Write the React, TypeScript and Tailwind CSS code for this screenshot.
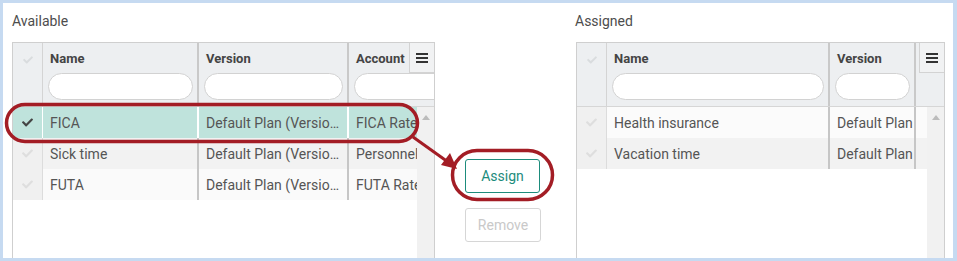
import React from 'react';
import { FaCheck } from 'react-icons/fa';

type Col = { key: string; label: string; width: number };

interface GridProps {
  cols: Col[];
  rows: { cells: string[]; selected?: boolean; bg: string }[];
}

function MenuIcon() {
  return (
    <svg width="12" height="10" viewBox="0 0 12 10">
      <rect x="0" y="0" width="12" height="2" fill="#333" />
      <rect x="0" y="4" width="12" height="2" fill="#333" />
      <rect x="0" y="8" width="12" height="2" fill="#333" />
    </svg>
  );
}

function Grid({ cols, rows }: GridProps) {
  return (
    <div className="flex-1 min-h-0 flex flex-col border border-b-0 border-[#cfcfcf] bg-white overflow-hidden">
      {/* Header */}
      <div className="relative flex h-[64px] shrink-0 bg-[#edeff1] border-b border-[#d6d6d6] overflow-hidden">
        <div className="w-[30px] shrink-0 border-r border-[#d4d4d4] flex justify-center pt-[12px]">
          <FaCheck className="text-[#d9dcde] w-[10px] h-[10px]" />
        </div>
        {cols.map((c) => (
          <div
            key={c.key}
            style={{ width: c.width }}
            className="shrink-0 flex flex-col border-r-2 border-[#c9c9c9]"
          >
            <div className="h-[30px] pl-[7px] pt-[1px] leading-[30px] text-[13px] font-bold text-[#444] whitespace-nowrap overflow-hidden">
              {c.label}
            </div>
            <div className="pl-[5px] pr-[4px]">
              <div className="h-[27px] rounded-full border border-[#d2d2d2] bg-white" />
            </div>
          </div>
        ))}
        <div className="absolute top-0 right-0 w-[25px] h-[30px] bg-[#f1f2f3] border-l border-b border-[#d3d3d3] flex items-center justify-center">
          <MenuIcon />
        </div>
      </div>

      {/* Body */}
      <div className="flex-1 flex min-h-0">
        <div className="flex-1 min-w-0 overflow-hidden">
          {rows.map((r, i) => (
            <div key={i} className={`flex h-[31px] text-[14px] text-[#555] ${r.bg}`}>
              <div
                className={`w-[30px] shrink-0 flex items-center justify-center border-r ${
                  r.selected ? 'border-white' : 'border-[#dcdcdc] bg-[#f0f0f0]'
                }`}
              >
                <FaCheck className={`w-[11px] h-[11px] ${r.selected ? 'text-[#444]' : 'text-[#dedede]'}`} />
              </div>
              {cols.map((c, j) => (
                <div
                  key={c.key}
                  style={{ width: c.width }}
                  className={`shrink-0 pl-[7px] pt-[1px] leading-[30px] whitespace-nowrap overflow-hidden ${
                    j < cols.length - 1 || c.key === 'last'
                      ? r.selected
                        ? 'border-r-2 border-white'
                        : 'border-r-2 border-[#c6c6c6]'
                      : ''
                  }`}
                >
                  {r.cells[j]}
                </div>
              ))}
            </div>
          ))}
        </div>
        <div className="w-[17px] shrink-0 bg-[#f1f1f1] flex justify-center pt-[8px]">
          <svg width="8" height="5" viewBox="0 0 8 5">
            <path d="M0 5 L4 0 L8 5 Z" fill="#bcbcbc" />
          </svg>
        </div>
      </div>
    </div>
  );
}

export default function App() {
  return (
    <div
      className="relative w-[957px] h-[261px] bg-white border-t-[3px] border-l-[3px] border-b-[3px] border-r-[4px] border-[#c6daf1] flex pl-[9px] pr-[8px] pt-[8px]"
      style={{ fontFamily: 'Roboto, "Liberation Sans", sans-serif' }}
    >
      {/* Available */}
      <div className="w-[423px] shrink-0 flex flex-col">
        <div className="h-[20px] mb-[11px] text-[14px] leading-[20px] text-[#4d4d4d]">Available</div>
        <Grid
          cols={[
            { key: 'name', label: 'Name', width: 156 },
            { key: 'version', label: 'Version', width: 150 },
            { key: 'account', label: 'Account', width: 150 },
          ]}
          rows={[
            { cells: ['FICA', 'Default Plan (Versio…', 'FICA Rate'], selected: true, bg: 'bg-[#bfe3dc]' },
            { cells: ['Sick time', 'Default Plan (Versio…', 'Personnel'], bg: 'bg-[#f2f2f2]' },
            { cells: ['FUTA', 'Default Plan (Versio…', 'FUTA Rate'], bg: 'bg-[#fafafa]' },
          ]}
        />
      </div>

      {/* Actions */}
      <div className="w-[141px] shrink-0 flex flex-col pl-[30px] pt-[148px] gap-[15px]">
        <button className="w-[75px] h-[34px] rounded-[3px] border border-[#1d8c7c] text-[14px] text-[#1d8c7c] bg-white">
          Assign
        </button>
        <button className="w-[76px] h-[34px] rounded-[3px] border border-[#d6d6d6] text-[14px] text-[#c9c9c9] bg-white">
          Remove
        </button>
      </div>

      {/* Assigned */}
      <div className="w-[369px] shrink-0 flex flex-col">
        <div className="h-[20px] mb-[11px] -ml-px text-[14px] leading-[20px] text-[#4d4d4d]">Assigned</div>
        <Grid
          cols={[
            { key: 'name', label: 'Name', width: 223 },
            { key: 'last', label: 'Version', width: 86 },
          ]}
          rows={[
            { cells: ['Health insurance', 'Default Plan'], bg: 'bg-[#fbfbfb]' },
            { cells: ['Vacation time', 'Default Plan'], bg: 'bg-[#f2f2f2]' },
          ]}
        />
      </div>

      {/* Annotation overlay */}
      <svg
        className="absolute pointer-events-none"
        style={{ left: -3, top: -3 }}
        width="957"
        height="261"
        viewBox="0 0 957 261"
      >
        <rect x="6.5" y="104.5" width="411" height="37" rx="18.5" fill="none" stroke="#a31d25" strokeWidth="3.5" />
        <rect x="452.5" y="150.5" width="100" height="49" rx="24.5" fill="none" stroke="#a31d25" strokeWidth="3.5" />
        <line x1="413" y1="137" x2="448" y2="162" stroke="#a31d25" strokeWidth="3" />
        <path d="M457 169 L441 165 L450 153 Z" fill="#a31d25" />
      </svg>
    </div>
  );
}
